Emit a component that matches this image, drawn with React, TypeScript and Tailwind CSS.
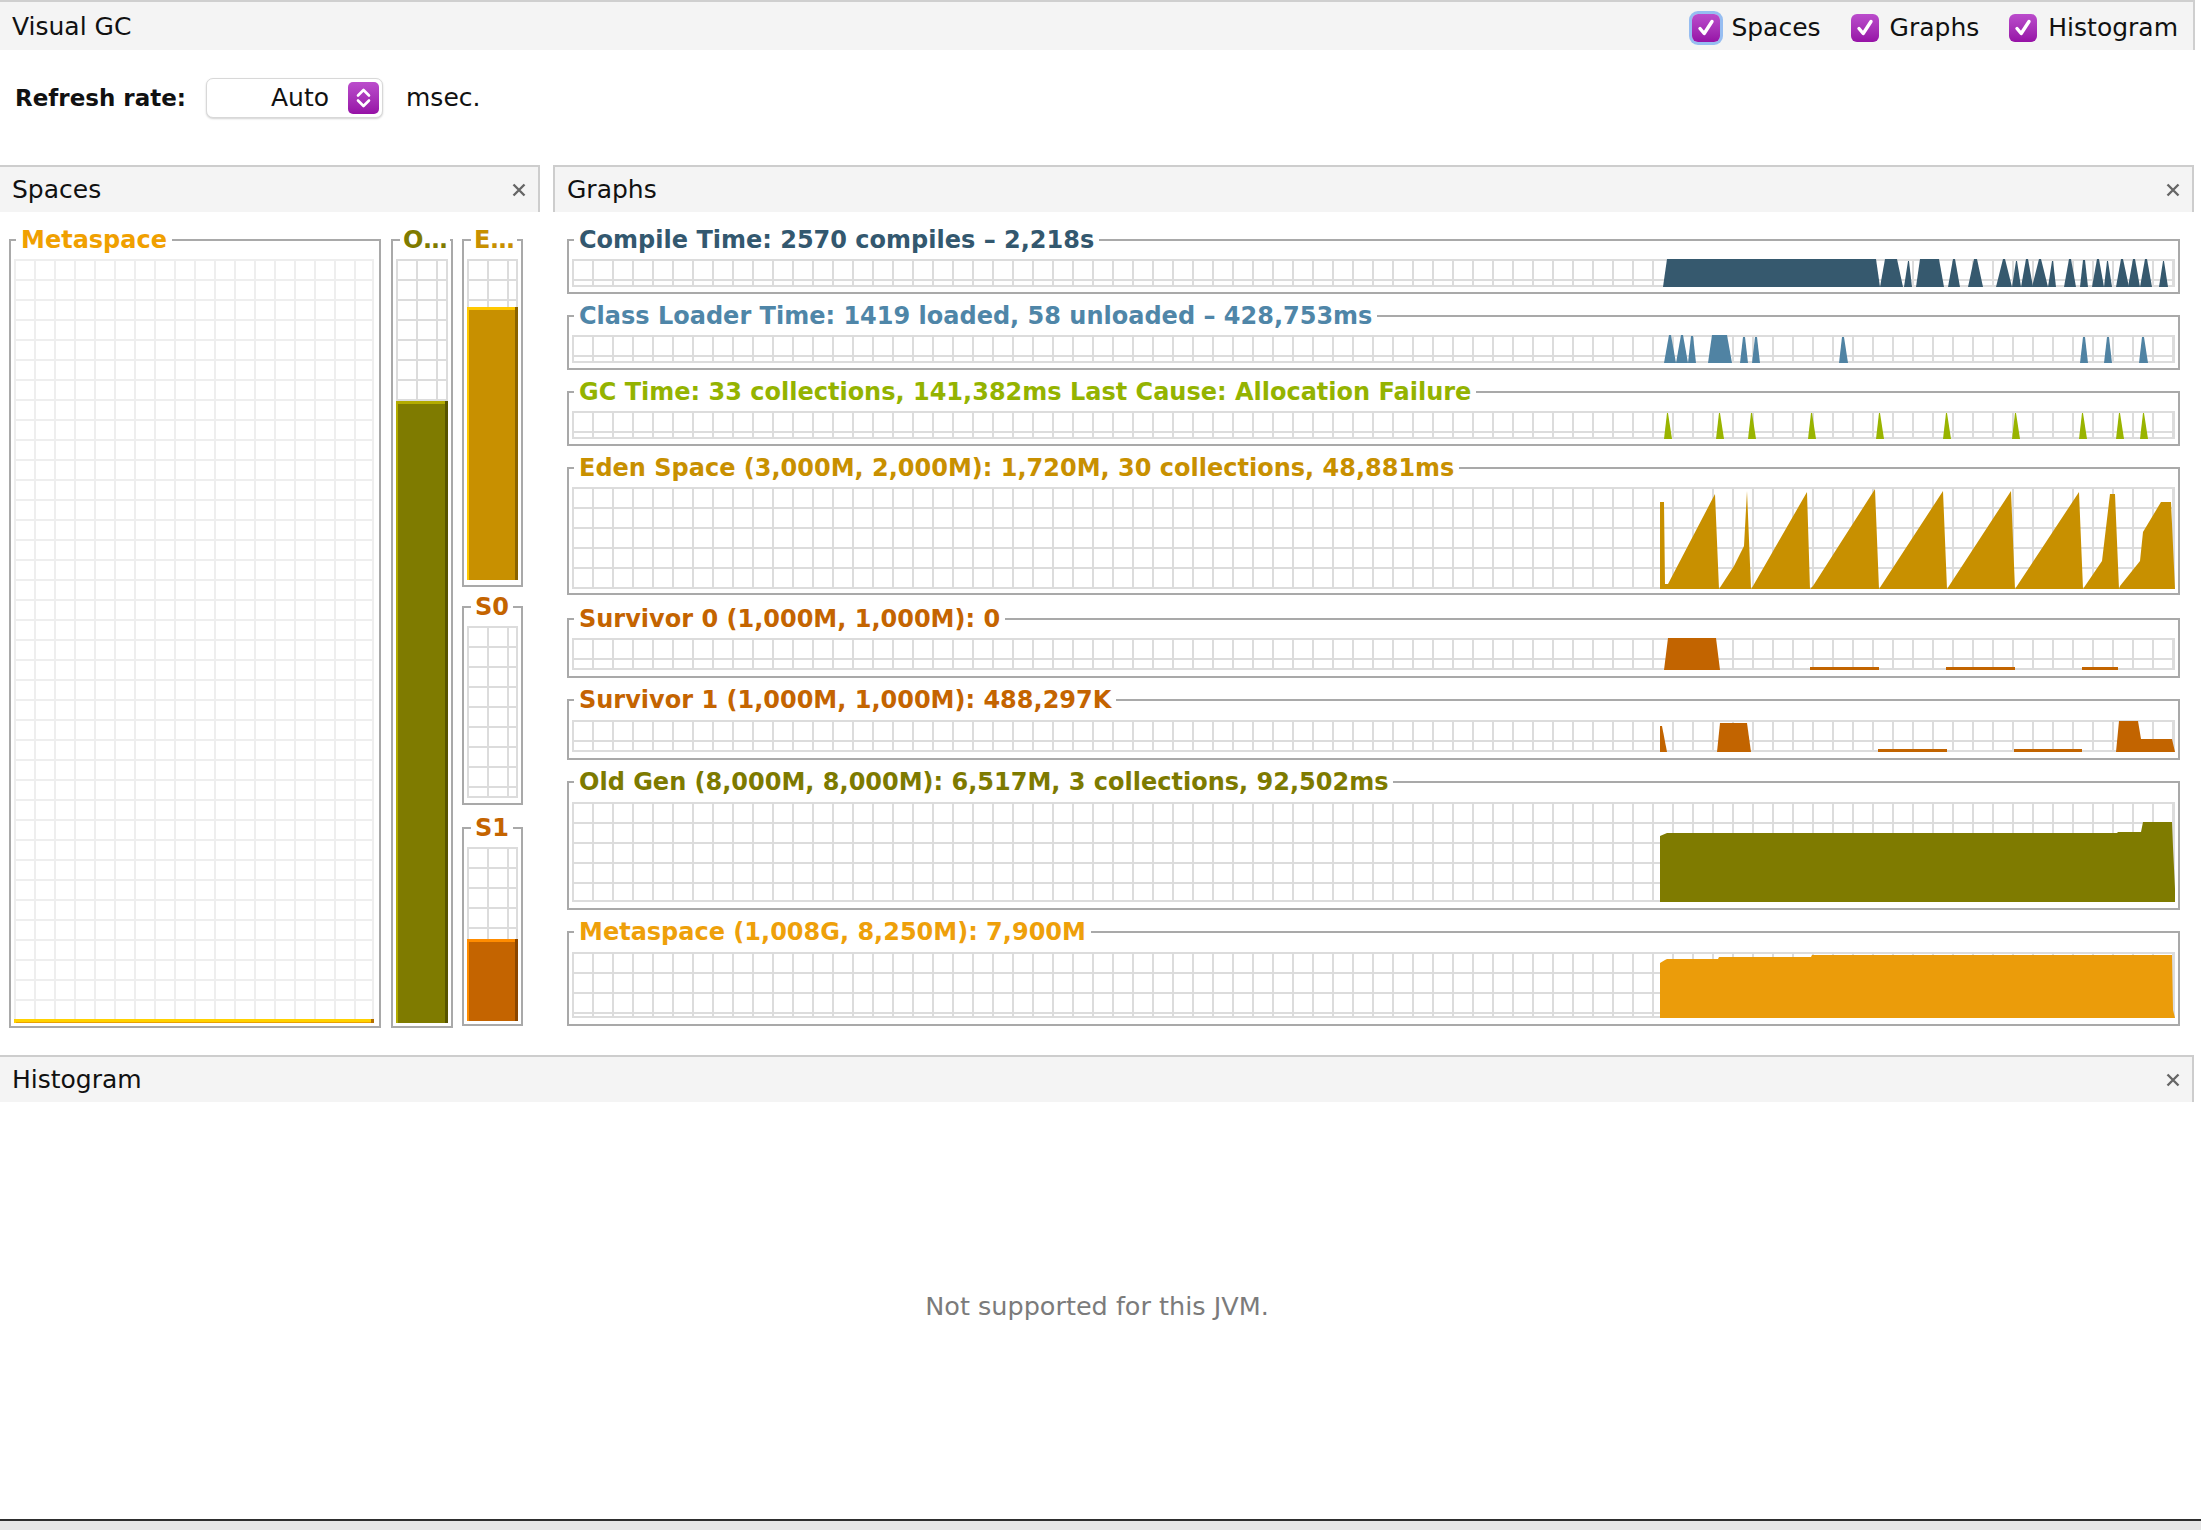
import React from "react";

// page x where every graph's plotting area starts
const GX = 572;

type Pt = [number, number];

// trapezoid: [x0, topStart, topEnd, x1, topY]
const trap = (t: number[], h: number): Pt[] => [
  [t[0], h],
  [t[1], t[4]],
  [t[2], t[4]],
  [t[3], h],
];

const spike = (c: number, top: number, h: number): Pt[] =>
  trap([c - 4, c - 1, c, c + 4, top], h);

function Grid({
  id,
  w,
  h,
  line = "#dcdcdc",
  children,
}: {
  id: string;
  w: number;
  h: number;
  line?: string;
  children?: React.ReactNode;
}) {
  return (
    <svg width={w} height={h} className="block">
      <defs>
        <pattern id={id} width="20" height="20" patternUnits="userSpaceOnUse">
          <rect width="20" height="2" fill={line} />
          <rect width="2" height="20" fill={line} />
        </pattern>
      </defs>
      <rect width={w} height={h} fill="#fff" />
      <rect width={w} height={h} fill={`url(#${id})`} />
      <rect x={w - 2} width="2" height={h} fill={line} />
      <rect y={h - 2} width={w} height="2" fill={line} />
      {children}
    </svg>
  );
}

function Box({
  label,
  textClass,
  className = "",
  legendClass = "ml-[2px] px-[5px]",
  children,
}: {
  label: string;
  textClass: string;
  className?: string;
  legendClass?: string;
  children: React.ReactNode;
}) {
  return (
    <fieldset className={`border-2 border-[#a9a9a9] px-[3px] min-w-0 shrink-0 ${className}`}>
      <legend
        className={`${legendClass} text-[24px] leading-[28px] font-bold whitespace-nowrap ${textClass}`}
      >
        {label}
      </legend>
      {children}
    </fieldset>
  );
}

function Graph({
  id,
  label,
  textClass,
  fill,
  h,
  shapes,
  className,
}: {
  id: string;
  label: string;
  textClass: string;
  fill: string;
  h: number;
  shapes: Pt[][];
  className: string;
}) {
  return (
    <Box label={label} textClass={textClass} className={`w-[1613px] ${className}`}>
      <Grid id={id} w={1603} h={h}>
        {shapes.map((s, i) => (
          <polygon
            key={i}
            fill={fill}
            points={s.map(([x, y]) => `${x - GX},${y}`).join(" ")}
          />
        ))}
      </Grid>
    </Box>
  );
}

function Bar({
  id,
  w,
  h,
  top,
  main,
  hi,
  lo,
  line,
}: {
  id: string;
  w: number;
  h: number;
  top?: number;
  main?: string;
  hi?: string;
  lo?: string;
  line?: string;
}) {
  return (
    <Grid id={id} w={w} h={h} line={line}>
      {top !== undefined && (
        <g>
          <rect x="0" y={top} width={w} height={h - top} fill={main} />
          <rect x="0" y={top} width="2" height={h - top} fill={hi} />
          <rect x={w - 3} y={top} width="3" height={h - top} fill={lo} />
          <rect x="0" y={top} width={w - 3} height="3" fill={hi} />
        </g>
      )}
    </Grid>
  );
}

function XIcon() {
  return (
    <svg width="14" height="14" viewBox="0 0 14 14">
      <path d="M1.5 1.5 L12.5 12.5 M12.5 1.5 L1.5 12.5" stroke="#666" strokeWidth="2.4" />
    </svg>
  );
}

function PanelHeader({ title, className = "" }: { title: string; className?: string }) {
  return (
    <div
      className={`h-[47px] bg-[#f4f4f4] border-t-2 border-[#cdcdcd] flex items-center justify-between pl-[12px] pr-[12px] ${className}`}
    >
      <span className="text-[25px]">{title}</span>
      <XIcon />
    </div>
  );
}

function Check({ label, focus, className = "" }: { label: string; focus?: boolean; className?: string }) {
  return (
    <div className={`flex items-center ${className}`}>
      <span
        className={`w-[28px] h-[28px] rounded-[6px] flex items-center justify-center bg-linear-to-b from-[#bb4ccc] to-[#9611a6] ${
          focus ? "shadow-[0_0_0_3px_rgba(110,165,240,0.7)]" : ""
        }`}
      >
        <svg width="20" height="20" viewBox="0 0 20 20">
          <path
            d="M4 10.5 L8.2 15.5 L16 3.5"
            stroke="#fff"
            strokeWidth="3.4"
            fill="none"
            strokeLinecap="round"
            strokeLinejoin="round"
          />
        </svg>
      </span>
      <span className="ml-[11px] text-[25px]">{label}</span>
    </div>
  );
}

const compileT = [
  [1663, 1667, 1876, 1880, 0],
  [1880, 1885, 1897, 1903, 0],
  [1904, 1908, 1909, 1912, 2],
  [1916, 1920, 1939, 1944, 0],
  [1948, 1953, 1955, 1960, 0],
  [1968, 1974, 1977, 1983, 0],
  [1996, 2003, 2005, 2012, 0],
  [2012, 2016, 2017, 2021, 2],
  [2021, 2026, 2028, 2033, 0],
  [2032, 2039, 2041, 2048, 0],
  [2048, 2052, 2053, 2056, 2],
  [2064, 2069, 2071, 2076, 0],
  [2080, 2083, 2085, 2088, 1],
  [2092, 2097, 2099, 2104, 0],
  [2104, 2107, 2108, 2112, 2],
  [2116, 2121, 2123, 2129, 0],
  [2128, 2133, 2135, 2140, 0],
  [2140, 2145, 2147, 2152, 0],
  [2159, 2163, 2164, 2168, 2],
];

const classT = [
  [1664, 1669, 1671, 1676, 0],
  [1676, 1681, 1683, 1688, 0],
  [1688, 1691, 1693, 1696, 1],
  [1708, 1712, 1727, 1732, 0],
  [1740, 1743, 1745, 1748, 2],
  [1752, 1755, 1757, 1760, 2],
  [1839, 1842, 1844, 1848, 2],
  [2080, 2083, 2085, 2088, 2],
  [2104, 2107, 2109, 2112, 2],
  [2139, 2142, 2144, 2148, 2],
];

const gcC = [1668, 1720, 1752, 1812, 1880, 1947, 2016, 2083, 2120, 2144];

const eden: Pt[] = [
  [1660, 102], [1660, 15], [1664, 15], [1665, 97], [1668, 97],
  [1715, 7], [1719, 102], [1721, 99], [1734, 79], [1744, 59], [1747, 4],
  [1751, 102], [1753, 99], [1807, 5], [1810, 102], [1813, 99], [1875, 2],
  [1879, 102], [1881, 99], [1943, 4], [1947, 102], [1949, 99], [2011, 4],
  [2015, 102], [2017, 99], [2079, 5], [2083, 102], [2085, 99], [2102, 74],
  [2110, 7], [2115, 7], [2119, 102], [2120, 99], [2140, 74], [2143, 45],
  [2161, 15], [2171, 15], [2175, 102],
];

const oldGen: Pt[] = [
  [1660, 100], [1660, 34], [1667, 31], [2117, 31], [2118, 30], [2141, 30],
  [2143, 20], [2172, 20], [2173, 45], [2175, 87], [2175, 100],
];

const metaG: Pt[] = [
  [1660, 66], [1660, 11], [1665, 8], [1667, 7], [1718, 7], [1719, 5],
  [1811, 5], [1812, 3], [2172, 3], [2173, 58], [2175, 66],
];

export default function App() {
  return (
    <div className="w-[2201px] h-[1530px] bg-white font-['DejaVu_Sans',sans-serif] text-[#111] overflow-hidden flex flex-col">
      <div className="w-[2195px] h-[50px] shrink-0 bg-[#f4f4f4] border-t-2 border-r-2 border-[#cfcfcf] flex items-center justify-between pl-[12px] pr-[15px] pt-[2px]">
        <span className="text-[25px]">Visual GC</span>
        <div className="flex items-center mt-[2px]">
          <Check label="Spaces" focus />
          <Check label="Graphs" className="ml-[30px]" />
          <Check label="Histogram" className="ml-[30px]" />
        </div>
      </div>

      <div className="h-[115px] shrink-0 flex items-start pt-[28px] pl-[15px]">
        <div className="w-[191px] h-[40px] flex items-center text-[23px] font-bold">Refresh rate:</div>
        <div className="w-[177px] h-[40px] rounded-[7px] bg-white border border-[#d8d8d8] shadow-[0_1px_2px_rgba(0,0,0,0.18)] flex items-center justify-end pr-[3px]">
          <span className="text-[25px]">Auto</span>
          <span className="ml-[19px] w-[31px] h-[32px] rounded-[5px] bg-linear-to-b from-[#bb4ccc] to-[#9610a6] flex items-center justify-center">
            <svg width="31" height="32" viewBox="0 0 31 32">
              <path
                d="M10 13.5 L15.5 8 L21 13.5 M10 18.5 L15.5 24 L21 18.5"
                stroke="#fff"
                strokeWidth="2.6"
                fill="none"
                strokeLinecap="round"
                strokeLinejoin="round"
              />
            </svg>
          </span>
        </div>
        <div className="h-[40px] flex items-center ml-[23px] text-[25px]">msec.</div>
      </div>

      <div className="h-[890px] w-[2194px] shrink-0 flex items-start">
        {/* Spaces */}
        <div className="w-[540px] shrink-0">
          <PanelHeader title="Spaces" className="border-r-2" />
          <div className="pt-[14px] pl-[9px] flex items-start">
            <Box label="Metaspace" textClass="text-[#f0a000]" className="w-[372px] pt-[5px] pb-[3px]">
              <Bar id="sp-meta" w={360} h={764} top={760} main="#eba000" hi="#ffd200" lo="#b57000" line="#eeeeee" />
            </Box>
            <Box
              label="O…"
              textClass="text-[#7f7b00]"
              legendClass="ml-[4px] px-[3px]"
              className="w-[62px] ml-[10px] pt-[5px] pb-[3px]"
            >
              <Bar id="sp-old" w={52} h={764} top={142} main="#7f7b00" hi="#b3ab00" lo="#575400" />
            </Box>
            <div className="ml-[9px] flex flex-col">
              <Box
                label="E…"
                textClass="text-[#c89000]"
                legendClass="ml-[4px] px-[3px]"
                className="w-[61px] pt-[5px] pb-[5px]"
              >
                <Bar id="sp-eden" w={51} h={321} top={48} main="#c89000" hi="#ffc800" lo="#8a6300" />
              </Box>
              <Box
                label="S0"
                textClass="text-[#c46400]"
                legendClass="ml-[4px] px-[4px]"
                className="w-[61px] mt-[6px] pt-[5px] pb-[5px]"
              >
                <Bar id="sp-s0" w={51} h={172} />
              </Box>
              <Box
                label="S1"
                textClass="text-[#c46400]"
                legendClass="ml-[4px] px-[4px]"
                className="w-[61px] mt-[9px] pt-[5px] pb-[3px]"
              >
                <Bar id="sp-s1" w={51} h={174} top={92} main="#c46400" hi="#ff8c00" lo="#8a4600" />
              </Box>
            </div>
          </div>
        </div>

        {/* Graphs */}
        <div className="w-[1641px] ml-[13px] shrink-0">
          <PanelHeader title="Graphs" className="border-x-2" />
          <div className="pt-[14px] pl-[14px] flex flex-col">
            <Graph
              id="g-compile"
              label="Compile Time: 2570 compiles – 2,218s"
              textClass="text-[#33586f]"
              fill="#36596e"
              h={28}
              shapes={compileT.map((t) => trap(t, 28))}
              className="pt-[5px] pb-[5px]"
            />
            <Graph
              id="g-class"
              label="Class Loader Time: 1419 loaded, 58 unloaded – 428,753ms"
              textClass="text-[#4f86a8]"
              fill="#5083a3"
              h={28}
              shapes={classT.map((t) => trap(t, 28))}
              className="mt-[8px] pt-[5px] pb-[5px]"
            />
            <Graph
              id="g-gc"
              label="GC Time: 33 collections, 141,382ms Last Cause: Allocation Failure"
              textClass="text-[#94b300]"
              fill="#99b400"
              h={28}
              shapes={gcC.map((c) => spike(c, 2, 28))}
              className="mt-[8px] pt-[5px] pb-[5px]"
            />
            <Graph
              id="g-eden"
              label="Eden Space (3,000M, 2,000M): 1,720M, 30 collections, 48,881ms"
              textClass="text-[#c89000]"
              fill="#c89000"
              h={102}
              shapes={[eden]}
              className="mt-[8px] pt-[5px] pb-[4px]"
            />
            <Graph
              id="g-s0"
              label="Survivor 0 (1,000M, 1,000M): 0"
              textClass="text-[#c46400]"
              fill="#c26400"
              h={32}
              shapes={[
                trap([1664, 1668, 1716, 1720, 0], 32),
                trap([1810, 1810, 1879, 1879, 29], 32),
                trap([1946, 1946, 2015, 2015, 29], 32),
                trap([2082, 2082, 2118, 2118, 29], 32),
              ]}
              className="mt-[10px] pt-[5px] pb-[6px]"
            />
            <Graph
              id="g-s1"
              label="Survivor 1 (1,000M, 1,000M): 488,297K"
              textClass="text-[#c46400]"
              fill="#c26400"
              h={32}
              shapes={[
                trap([1660, 1660, 1662, 1667, 6], 32),
                trap([1717, 1720, 1747, 1751, 3], 32),
                trap([1878, 1878, 1947, 1947, 29], 32),
                trap([2014, 2014, 2082, 2082, 29], 32),
                [[2116, 32], [2119, 1], [2138, 1], [2141, 19], [2172, 19], [2175, 32]],
              ]}
              className="mt-[8px] pt-[6px] pb-[6px]"
            />
            <Graph
              id="g-old"
              label="Old Gen (8,000M, 8,000M): 6,517M, 3 collections, 92,502ms"
              textClass="text-[#7d7a00]"
              fill="#7f7b00"
              h={100}
              shapes={[oldGen]}
              className="mt-[8px] pt-[6px] pb-[6px]"
            />
            <Graph
              id="g-meta"
              label="Metaspace (1,008G, 8,250M): 7,900M"
              textClass="text-[#eea00a]"
              fill="#eb9c0a"
              h={66}
              shapes={[metaG]}
              className="mt-[8px] pt-[6px] pb-[6px]"
            />
          </div>
        </div>
      </div>

      <div className="w-[2194px] shrink-0">
        <PanelHeader title="Histogram" className="border-r-2" />
        <div className="h-[417px] flex items-center justify-center pb-[8px] text-[25.5px] text-[#7b7b7b]">
          Not supported for this JVM.
        </div>
      </div>
      <div className="h-[2px] shrink-0 bg-[#2e2e2e]" />
      <div className="flex-1 bg-[#e6e6e6]" />
    </div>
  );
}
